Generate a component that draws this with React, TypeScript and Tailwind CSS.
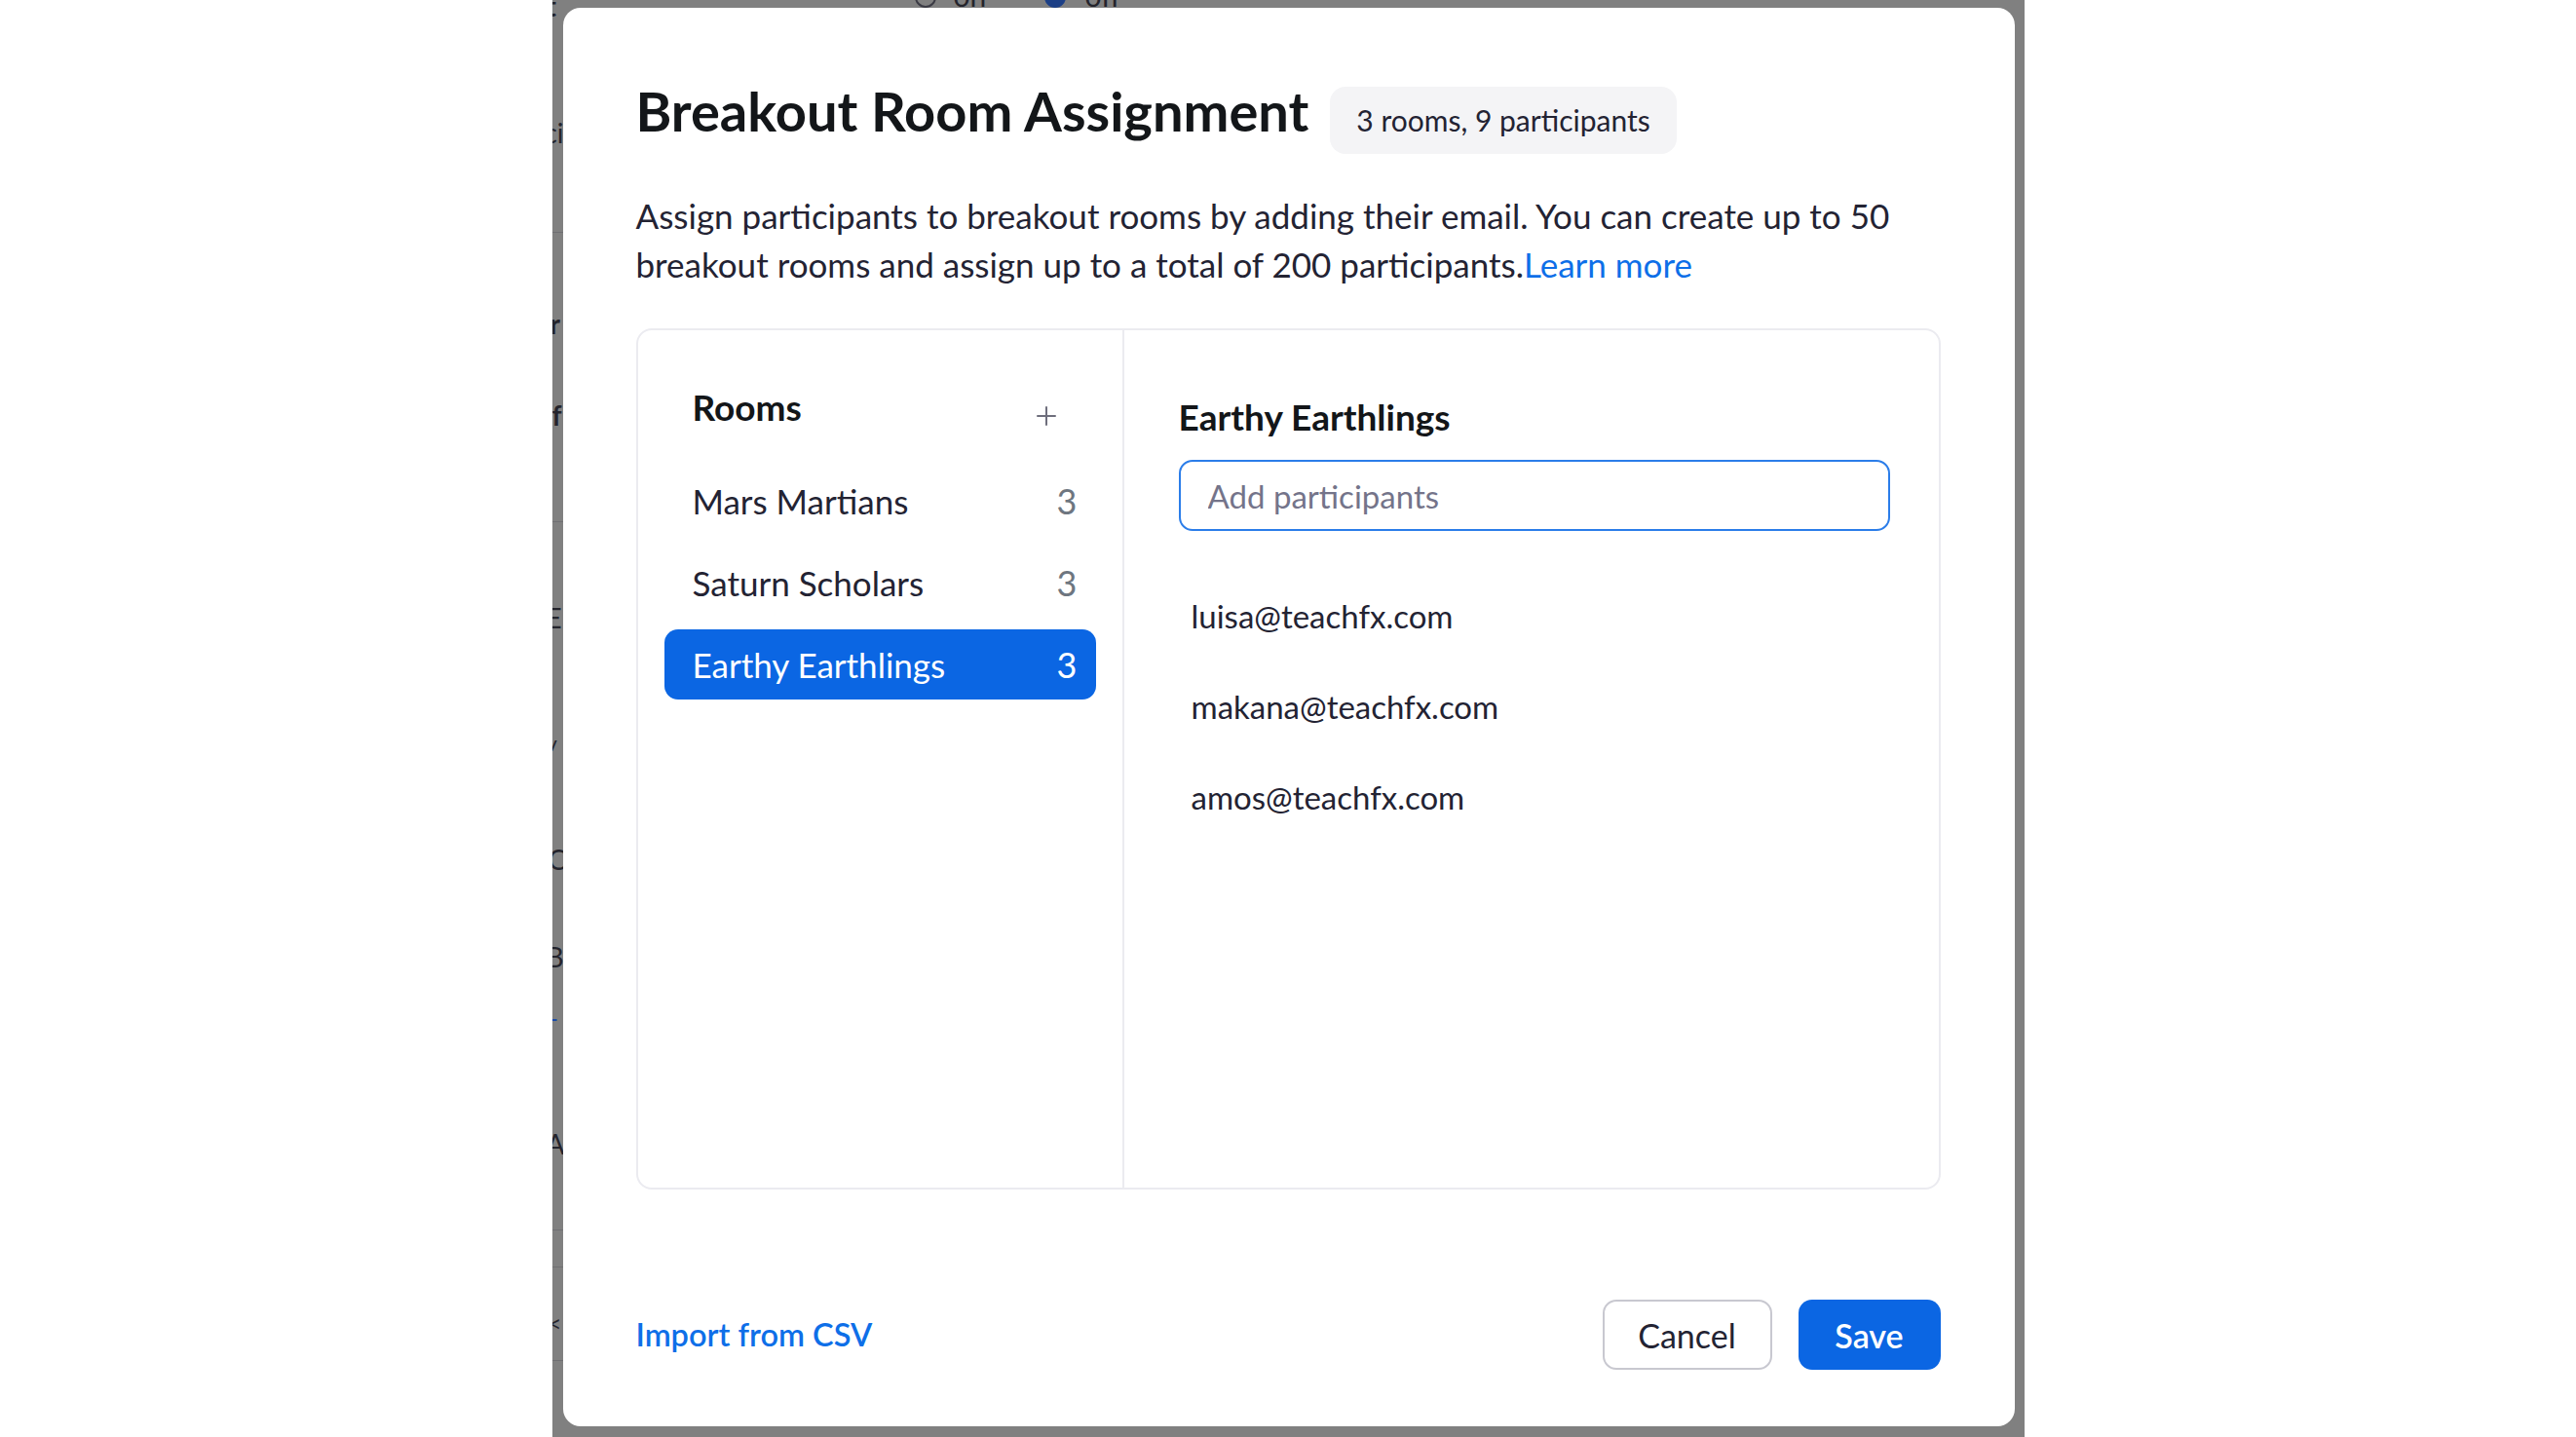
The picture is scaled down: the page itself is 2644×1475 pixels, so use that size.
import React from "react";

const rooms = [
  { name: "Mars Martians", count: 3, active: false },
  { name: "Saturn Scholars", count: 3, active: false },
  { name: "Earthy Earthlings", count: 3, active: true },
];

const emails = ["luisa@teachfx.com", "makana@teachfx.com", "amos@teachfx.com"];

function Backdrop() {
  return (
    <div className="absolute inset-0 text-[#24242c] text-[28px] leading-none">
      {/* radios from the underlying page */}
      <div className="absolute left-[372px] top-[-14px] w-[22px] h-[22px] rounded-full border-2 border-[#3a3a44]" />
      <span className="absolute left-[412px] top-[-20px] text-[30px]">on</span>
      <div className="absolute left-[505px] top-[-14px] w-[22px] h-[22px] rounded-full border-2 border-[#1c3f86] bg-[#1c3f86]" />
      <span className="absolute left-[547px] top-[-20px] text-[30px]">off</span>
      {/* left edge fragments */}
      <span className="absolute left-[-6px] top-[-8px] font-bold">t</span>
      <span className="absolute left-[-8px] top-[122px]">ci</span>
      <div className="absolute left-0 top-[238px] w-[12px] h-px bg-[#6f6f72]" />
      <span className="absolute left-[-2px] top-[318px] font-bold">r</span>
      <span className="absolute left-[0px] top-[412px] font-bold">f</span>
      <div className="absolute left-0 top-[535px] w-[12px] h-px bg-[#6f6f72]" />
      <span className="absolute left-[-6px] top-[620px]">E</span>
      <span className="absolute left-[-6px] top-[752px] text-[22px]">v</span>
      <span className="absolute left-[-4px] top-[868px]">C</span>
      <span className="absolute left-[-6px] top-[968px]">B</span>
      <span className="absolute left-[-10px] top-[1032px] text-[#1c4aa8]">+</span>
      <span className="absolute left-[-6px] top-[1160px]">A</span>
      <div className="absolute left-0 top-[1262px] w-[12px] h-px bg-[#6f6f72]" />
      <div className="absolute left-0 top-[1300px] w-[12px] h-px bg-[#6f6f72]" />
      <span className="absolute left-[-4px] top-[1346px] text-[24px]">&lt;</span>
      <div className="absolute left-0 top-[1396px] w-[12px] h-px bg-[#6f6f72]" />
    </div>
  );
}

export default function App() {
  return (
    <div className="w-[2644px] h-[1475px] bg-white flex justify-center font-['Lato',sans-serif] text-[#232333]">
      <div className="relative w-[1511px] h-[1475px] bg-[#808080] overflow-hidden">
        <Backdrop />
        <div className="relative ml-[11px] mt-[8px] w-[1490px] h-[1456px] bg-white rounded-[18px] pt-[74px] pl-[75px] pr-[76px] flex flex-col">
          <div className="flex items-baseline gap-[22px]">
            <h1 className="text-[56px] leading-[64px] font-bold text-[#131619] whitespace-nowrap">
              Breakout Room Assignment
            </h1>
            <span className="h-[69px] leading-[69px] px-[27px] rounded-[16px] bg-[#f4f4f6] text-[30px] text-[#232333] whitespace-nowrap">
              3 rooms, 9 participants
            </span>
          </div>

          <p className="mt-[38px] text-[35px] leading-[50px] text-[#232333]">
            Assign participants to breakout rooms by adding their email. You can create up to 50 breakout
            rooms and assign up to a total of 200 participants.
            <a className="text-[#0e6fe8] cursor-pointer">Learn more</a>
          </p>

          <div className="mt-[41px] h-[884px] border-2 border-[#ebebf0] rounded-[16px] flex">
            <div className="w-[499px] border-r-2 border-[#ebebf0] px-[27px] pt-[57px] flex flex-col">
              <div className="h-[44px] flex items-center justify-between pl-[29px] pr-[40px] mb-[38px]">
                <span className="text-[37px] font-bold text-[#131619]">Rooms</span>
                <svg className="mt-[18px]" width="22" height="22" viewBox="0 0 22 22" fill="none">
                  <path d="M11 2v18M2 11h18" stroke="#6e6e7c" strokeWidth="2" strokeLinecap="round" />
                </svg>
              </div>
              <div className="flex flex-col gap-[12px]">
                {rooms.map((r) => (
                  <div
                    key={r.name}
                    className={
                      r.active
                        ? "h-[72px] rounded-[14px] flex items-center justify-between pl-[29px] pr-[19px] text-[35px] bg-[#0b66e3] text-white"
                        : "h-[72px] rounded-[14px] flex items-center justify-between pl-[29px] pr-[19px] text-[35px] text-[#232333]"
                    }
                  >
                    <span>{r.name}</span>
                    <span className={r.active ? "text-white text-[36px]" : "text-[#6e7680] text-[36px]"}>{r.count}</span>
                  </div>
                ))}
              </div>
            </div>

            <div className="flex-1 pl-[56px] pr-[50px] pt-[67px] flex flex-col">
              <h2 className="text-[37px] leading-[43px] font-bold text-[#131619]">Earthy Earthlings</h2>
              <input
                className="mt-[23px] h-[73px] w-full border-2 border-[#2b7de9] rounded-[14px] pl-[28px] text-[33px] outline-none placeholder:text-[#74748a] font-['Lato',sans-serif]"
                placeholder="Add participants"
              />
              <div className="mt-[67px] pl-[13px] flex flex-col gap-[53px]">
                {emails.map((e) => (
                  <div key={e} className="text-[33px] leading-[40px] text-[#232333]">
                    {e}
                  </div>
                ))}
              </div>
            </div>
          </div>

          <div className="mt-[113px] h-[72px] flex items-center justify-between">
            <a className="text-[32.5px] font-semibold text-[#0e6fe8] cursor-pointer">Import from CSV</a>
            <div className="flex items-center gap-[27px]">
              <button className="w-[174px] h-[72px] border-2 border-[#c8c8d0] rounded-[14px] text-[34px] text-[#232333] bg-white">
                Cancel
              </button>
              <button className="w-[146px] h-[72px] rounded-[14px] text-[34px] font-semibold text-white bg-[#0b66e3]">
                Save
              </button>
            </div>
          </div>
        </div>
      </div>
    </div>
  );
}
